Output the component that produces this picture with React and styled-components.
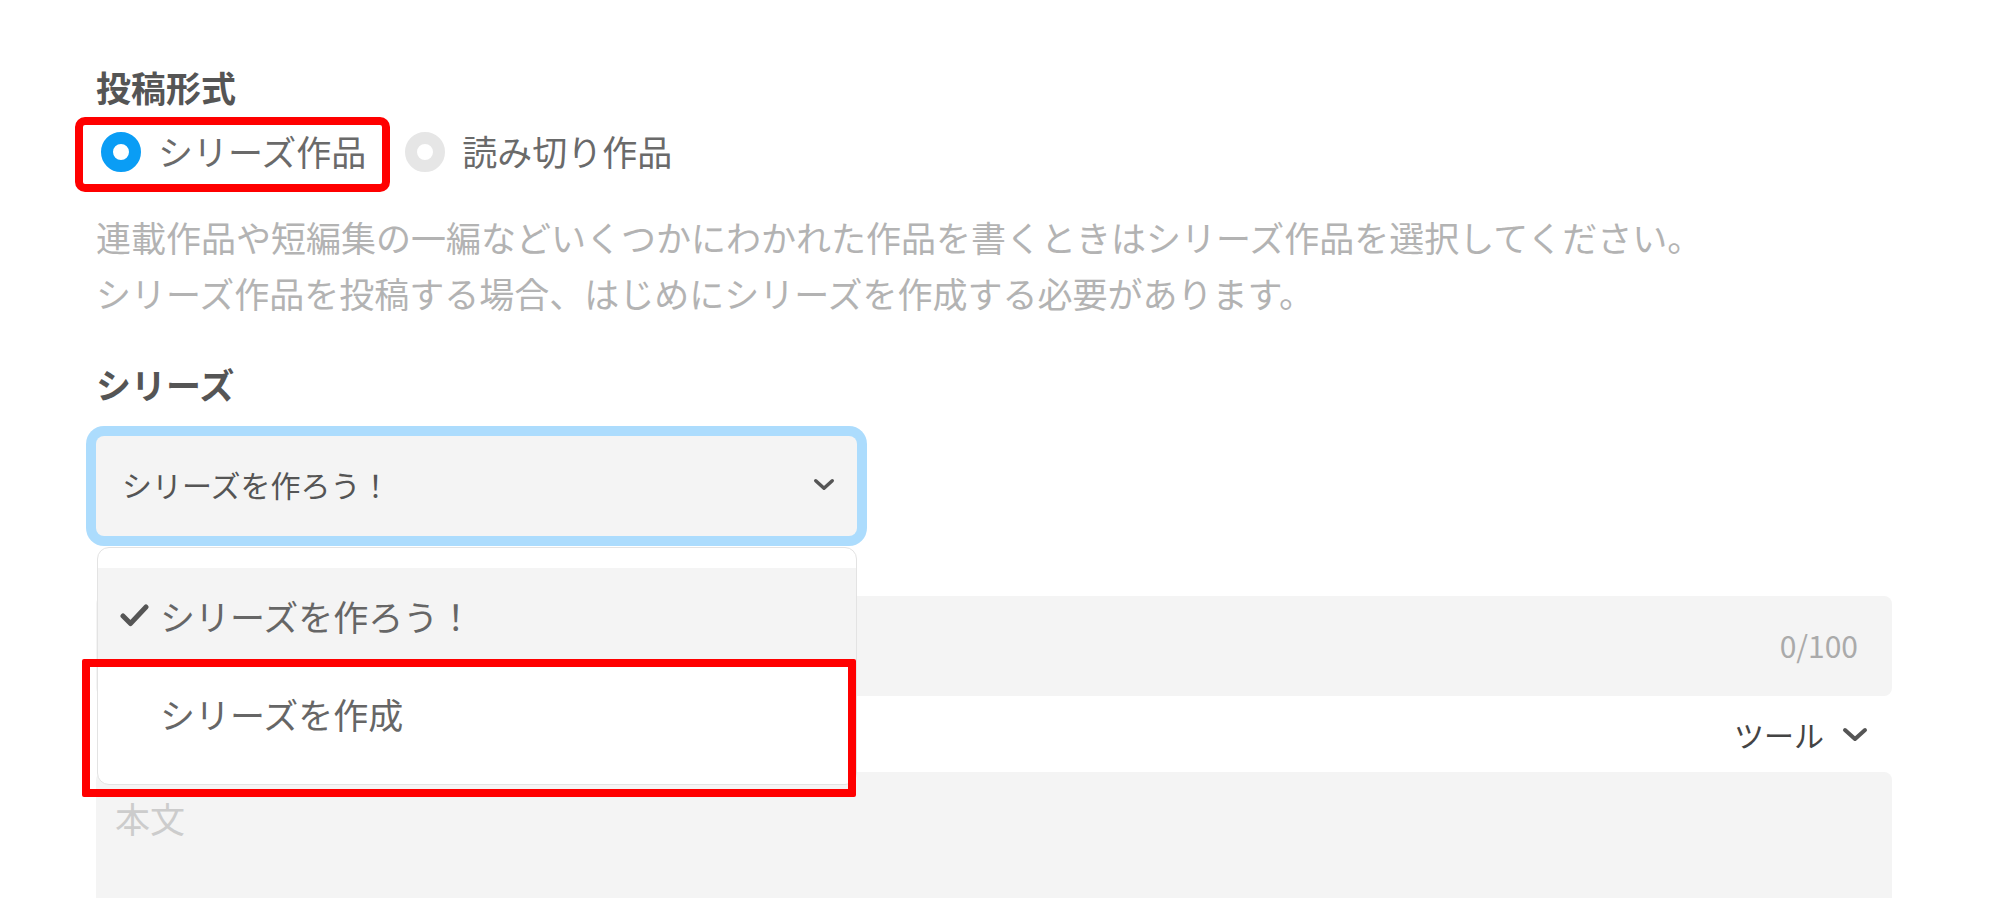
import React from "react";
import styled, { createGlobalStyle } from "styled-components";

const GlobalStyle = createGlobalStyle`
  html, body {
    margin: 0;
    padding: 0;
    background: #fff;
  }
  body {
    font-family: "Noto Sans CJK JP", "Noto Sans", sans-serif;
  }
`;

const Page = styled.div`
  width: 1999px;
  height: 898px;
  overflow: hidden;
  box-sizing: border-box;
  padding: 63px 107px 0 96px;
`;

const Heading = styled.h2`
  margin: ${(p) => p.$top || 0}px 0 0;
  font-size: 35px;
  line-height: 48px;
  font-weight: 700;
  color: #555;
`;

const RadioGroup = styled.div`
  display: flex;
  gap: 5px;
  margin: 14px 0 0 -13px;
`;

const RadioOption = styled.label`
  display: flex;
  align-items: center;
  gap: 17px;
  height: 59px;
  box-sizing: border-box;
  padding: 0 16px 5px 18px;
  font-size: 35px;
  line-height: 1;
  color: #6a6a6a;
  border-radius: 2px;
  outline: ${(p) => (p.$marked ? "8px solid #ff0000" : "none")};
`;

const RadioLabel = styled.span`
  margin-top: -4px;
`;

const RadioDot = styled.span`
  width: 40px;
  height: 40px;
  box-sizing: border-box;
  border-radius: 50%;
  background: #fff;
  border: 12px solid ${(p) => (p.$checked ? "#0a9df5" : "#e6e6e6")};
`;

const Hint = styled.p`
  margin: 25px 0 0;
  font-size: 35px;
  line-height: 56px;
  color: #b3b3b3;
`;

const SelectWrap = styled.div`
  position: relative;
  width: 761px;
  margin-top: 28px;
`;

const SelectBox = styled.div`
  display: flex;
  align-items: center;
  justify-content: space-between;
  height: 100px;
  box-sizing: border-box;
  padding: 0 22px 4px 26px;
  background: #f4f4f4;
  border-radius: 8px;
  box-shadow: 0 0 0 10px #acdcfd;
  font-size: 30px;
  color: #555;
`;

const Dropdown = styled.ul`
  position: absolute;
  top: 111px;
  left: 1px;
  z-index: 2;
  width: 760px;
  box-sizing: border-box;
  margin: 0;
  padding: 20px 0;
  list-style: none;
  background: #fff;
  border: 1px solid #e3e3e3;
  border-radius: 12px;
`;

const MenuItem = styled.li`
  display: flex;
  align-items: center;
  height: 98px;
  box-sizing: border-box;
  padding: 0 0 3px 22px;
  font-size: 35px;
  color: #666;
  background: ${(p) => (p.$active ? "#f4f4f4" : "#fff")};
`;

const CheckSlot = styled.span`
  display: flex;
  align-items: center;
  width: 40px;
`;

const MenuMark = styled.div`
  position: absolute;
  left: -16px;
  top: 111px;
  width: 774px;
  height: 138px;
  box-sizing: border-box;
  border: 8px solid #ff0000;
  border-radius: 2px;
  pointer-events: none;
`;

const TitleField = styled.div`
  display: flex;
  align-items: center;
  justify-content: flex-end;
  height: 100px;
  margin-top: 60px;
  box-sizing: border-box;
  padding: 0 34px 3px 0;
  background: #f4f4f4;
  border-radius: 8px;
  font-size: 30px;
  color: #aaa;
`;

const ToolRow = styled.div`
  display: flex;
  align-items: center;
  justify-content: flex-end;
  gap: 18px;
  height: 76px;
  padding-right: 24px;
  font-size: 30px;
  color: #444;
`;

const BodyField = styled.div`
  height: 200px;
  box-sizing: border-box;
  padding: 20px 19px;
  background: #f4f4f4;
  border-radius: 8px;
  font-size: 35px;
  line-height: 52px;
  color: #ccc;
`;

const Chevron = ({ w, h, sw }) => (
  <svg width={w} height={h} viewBox={`0 0 ${w} ${h}`} fill="none">
    <polyline
      points={`${sw / 2 + 1},${sw / 2 + 1} ${w / 2},${h - sw / 2 - 1} ${w - sw / 2 - 1},${sw / 2 + 1}`}
      stroke="#555"
      strokeWidth={sw}
      strokeLinecap="round"
      strokeLinejoin="round"
    />
  </svg>
);

const Check = () => (
  <svg width="29" height="23" viewBox="0 0 29 23" fill="none">
    <polyline
      points="3,12 10.5,19.5 26,3"
      stroke="#555"
      strokeWidth="5"
      strokeLinecap="round"
      strokeLinejoin="round"
    />
  </svg>
);

export default function App() {
  return (
    <Page>
      <GlobalStyle />
      <Heading>投稿形式</Heading>
      <RadioGroup>
        <RadioOption $marked>
          <RadioDot $checked />
          <RadioLabel>シリーズ作品</RadioLabel>
        </RadioOption>
        <RadioOption>
          <RadioDot />
          <RadioLabel>読み切り作品</RadioLabel>
        </RadioOption>
      </RadioGroup>
      <Hint>
        連載作品や短編集の一編などいくつかにわかれた作品を書くときはシリーズ作品を選択してください。
        <br />
        シリーズ作品を投稿する場合、はじめにシリーズを作成する必要があります。
      </Hint>

      <Heading $top={39}>シリーズ</Heading>
      <SelectWrap>
        <SelectBox>
          シリーズを作ろう！
          <Chevron w={22} h={13} sw={3.5} />
        </SelectBox>
        <Dropdown>
          <MenuItem $active>
            <CheckSlot>
              <Check />
            </CheckSlot>
            シリーズを作ろう！
          </MenuItem>
          <MenuItem>
            <CheckSlot />
            シリーズを作成
          </MenuItem>
          <MenuMark />
        </Dropdown>
      </SelectWrap>

      <TitleField>0/100</TitleField>
      <ToolRow>
        ツール
        <Chevron w={26} h={15} sw={4} />
      </ToolRow>
      <BodyField>本文</BodyField>
    </Page>
  );
}
